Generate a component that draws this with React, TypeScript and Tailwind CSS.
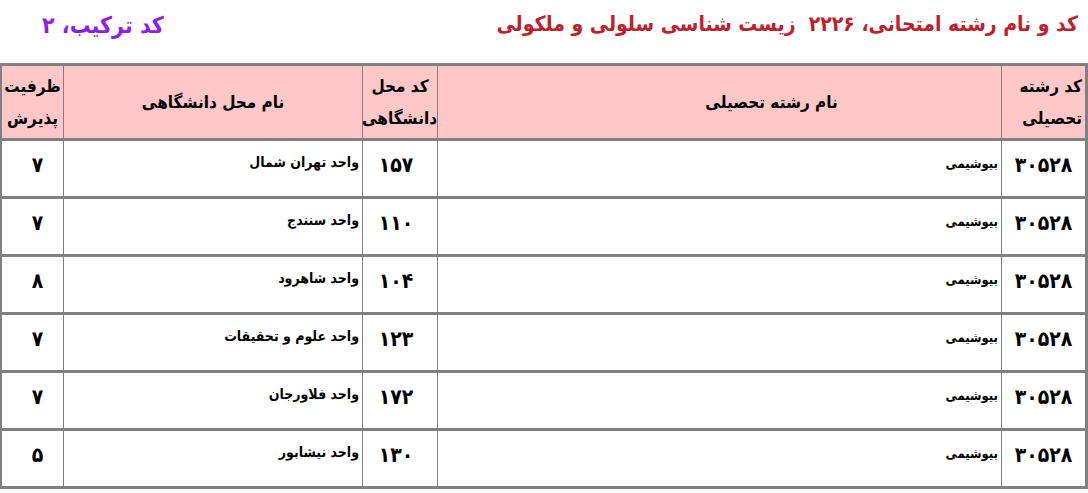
const ROWS = [
  { fieldCode: '۳۰۵۲۸', fieldName: 'بیوشیمی', uniCode: '۱۵۷', uniName: 'واحد تهران شمال', capacity: '۷' },
  { fieldCode: '۳۰۵۲۸', fieldName: 'بیوشیمی', uniCode: '۱۱۰', uniName: 'واحد سنندج', capacity: '۷' },
  { fieldCode: '۳۰۵۲۸', fieldName: 'بیوشیمی', uniCode: '۱۰۴', uniName: 'واحد شاهرود', capacity: '۸' },
  { fieldCode: '۳۰۵۲۸', fieldName: 'بیوشیمی', uniCode: '۱۲۳', uniName: 'واحد علوم و تحقیقات', capacity: '۷' },
  { fieldCode: '۳۰۵۲۸', fieldName: 'بیوشیمی', uniCode: '۱۷۲', uniName: 'واحد فلاورجان', capacity: '۷' },
  { fieldCode: '۳۰۵۲۸', fieldName: 'بیوشیمی', uniCode: '۱۳۰', uniName: 'واحد نیشابور', capacity: '۵' },
];

export default function App() {
  return (
    <div
      dir="rtl"
      className="w-[1088px] h-[493px] bg-white text-black overflow-hidden"
      style={{ fontFamily: 'Tahoma, "DejaVu Sans Condensed", "DejaVu Sans", sans-serif' }}
    >
      {/* title line */}
      <div className="flex items-center justify-between h-[50px] pr-[10px] pl-[42px] font-bold">
        <span className="text-[21px] text-[#c0202a]">
          کد و نام رشته امتحانی، ۲۲۲۶&nbsp;&nbsp;زیست شناسی سلولی و ملکولی
        </span>
        <span className="text-[23px] text-[#8a1ff0]">کد ترکیب، ۲</span>
      </div>

      {/* table */}
      <div className="mt-[13px] ml-[1px] w-[1086px]">
        <table className="w-full border-collapse border-[3px] border-[#808080] table-fixed">
          <colgroup>
            <col className="w-[85px]" />
            <col className="w-[564px]" />
            <col className="w-[75px]" />
            <col className="w-[299px]" />
            <col className="w-[63px]" />
          </colgroup>
          <thead>
            <tr className="bg-[#ffc7c7] h-[75px] border-b-[3px] border-[#808080] text-[17px] leading-[32px]">
              <th className="border-l border-[#808080] text-right pr-[3px] font-bold">کد رشته<br />تحصیلی</th>
              <th className="border-l border-[#808080] text-center pl-[104px] font-bold">نام رشته تحصیلی</th>
              <th className="border-l border-[#808080] text-center font-bold">کد محل<br />دانشگاهی</th>
              <th className="border-l border-[#808080] text-center font-bold">نام محل دانشگاهی</th>
              <th className="text-center font-bold">ظرفیت<br />پذیرش</th>
            </tr>
          </thead>
          <tbody>
            {ROWS.map((r, i) => (
              <tr key={i} className="h-[58px] border-b-[3px] border-[#808080] align-top">
                <td className="border-l border-[#808080] text-center pt-[9px] text-[21px] font-bold">{r.fieldCode}</td>
                <td className="border-l border-[#808080] text-right pr-[3px] pt-[13px] text-[13px] font-bold">{r.fieldName}</td>
                <td className="border-l border-[#808080] text-center pt-[9px] pr-[8px] text-[21px] font-bold">{r.uniCode}</td>
                <td className="border-l border-[#808080] text-right pr-[3px] pt-[11px] text-[14px] font-bold">{r.uniName}</td>
                <td className="text-center pt-[9px] pl-[10px] text-[21px] font-bold">{r.capacity}</td>
              </tr>
            ))}
          </tbody>
        </table>
      </div>
    </div>
  );
}
